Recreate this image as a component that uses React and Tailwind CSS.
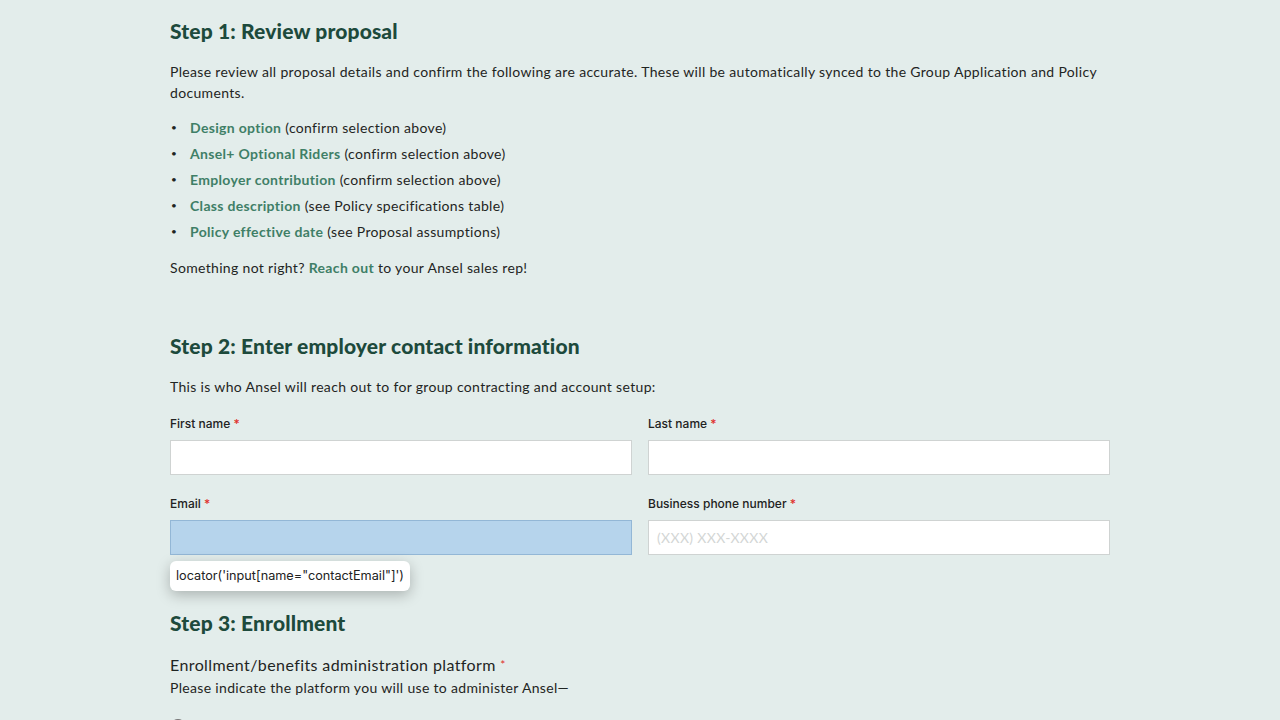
export default function App() {
  const items = [
    ["Design option", "(confirm selection above)"],
    ["Ansel+ Optional Riders", "(confirm selection above)"],
    ["Employer contribution", "(confirm selection above)"],
    ["Class description", "(see Policy specifications table)"],
    ["Policy effective date", "(see Proposal assumptions)"],
  ];
  const body = { fontFamily: "Lato, 'Open Sans', sans-serif", letterSpacing: "0.33px" };
  const head = { fontFamily: "Lato, 'Open Sans', sans-serif", letterSpacing: "0.15px" };
  const label = { fontFamily: "Inter, Roboto, sans-serif", letterSpacing: "0px" };
  return (
    <div className="w-[1280px] h-[720px] overflow-hidden bg-[#e3edeb]">
      <div className="w-[940px] ml-[170px] pt-[18px] text-[#1f2523]" style={body}>
        <h2 className="text-[21px] font-black text-[#1d4a3c] leading-[26px]" style={head}>Step 1: Review proposal</h2>
        <p className="mt-[17px] text-[14px] leading-[21px]">
          Please review all proposal details and confirm the following are accurate. These will be automatically synced to the Group Application and Policy documents.
        </p>
        <ul className="mt-[15px] flex flex-col gap-[7px] text-[14px]">
          {items.map(([b, t]) => (
            <li key={b} className="flex leading-[19px]">
              <span className="w-[20px] text-[10px] pl-[1px]">•</span>
              <span><b className="font-bold text-[#3f7f67]">{b}</b> {t}</span>
            </li>
          ))}
        </ul>
        <p className="mt-[16px] text-[14px] leading-[21px]">
          Something not right? <b className="font-bold text-[#3f7f67]">Reach out</b> to your Ansel sales rep!
        </p>

        <h2 className="mt-[55px] text-[21px] font-black text-[#1d4a3c] leading-[26px]" style={head}>Step 2: Enter employer contact information</h2>
        <p className="mt-[17px] text-[14px] leading-[21px]">This is who Ansel will reach out to for group contracting and account setup:</p>

        <div className="mt-[19px] grid grid-cols-2 gap-x-[16px] gap-y-[21px]">
          {[
            ["First name", ""],
            ["Last name", ""],
            ["Email", "email"],
            ["Business phone number", "phone"],
          ].map(([l, k]) => (
            <div key={l} className="relative">
              <div className="text-[12px] font-medium leading-[16px] text-[#222]" style={label}>
                {l} <span className="text-[#e0302b]">*</span>
              </div>
              <div
                className={
                  "mt-[8px] h-[35px] border flex items-center px-[8px] text-[14px] " +
                  (k === "email" ? "bg-[#b6d4ec] border-[#93b7d6]" : "bg-white border-[#cfd3d2]")
                }
              >
                {k === "phone" && <span className="text-[#d3d6d5]" style={body}>(XXX) XXX-XXXX</span>}
              </div>
              {k === "email" && (
                <div
                  className="absolute left-0 top-[65px] bg-white rounded-[6px] px-[6px] h-[30px] flex items-center text-[12.7px] text-[#222] shadow-[0_4px_14px_rgba(0,0,0,0.25)] whitespace-nowrap"
                  style={{ fontFamily: "Inter, sans-serif", letterSpacing: "0px" }}
                >
                  locator('input[name="contactEmail"]')
                </div>
              )}
            </div>
          ))}
        </div>

        <h2 className="mt-[55px] text-[21px] font-black text-[#1d4a3c] leading-[26px]" style={head}>Step 3: Enrollment</h2>
        <div className="mt-[19px] text-[16px] leading-[20px] tracking-[0.4px]">
          Enrollment/benefits administration platform <span className="text-[#e0302b] text-[12px] align-top">*</span>
        </div>
        <p className="mt-[3px] text-[14px] leading-[20px]">Please indicate the platform you will use to administer Ansel—</p>
        <div className="mt-[18px] flex items-center gap-[8px] text-[14px]">
          <span className="w-[16px] h-[16px] rounded-full border-2 border-[#777] bg-white" />
          <span>I use benefits admin platform</span>
        </div>
      </div>
    </div>
  );
}
